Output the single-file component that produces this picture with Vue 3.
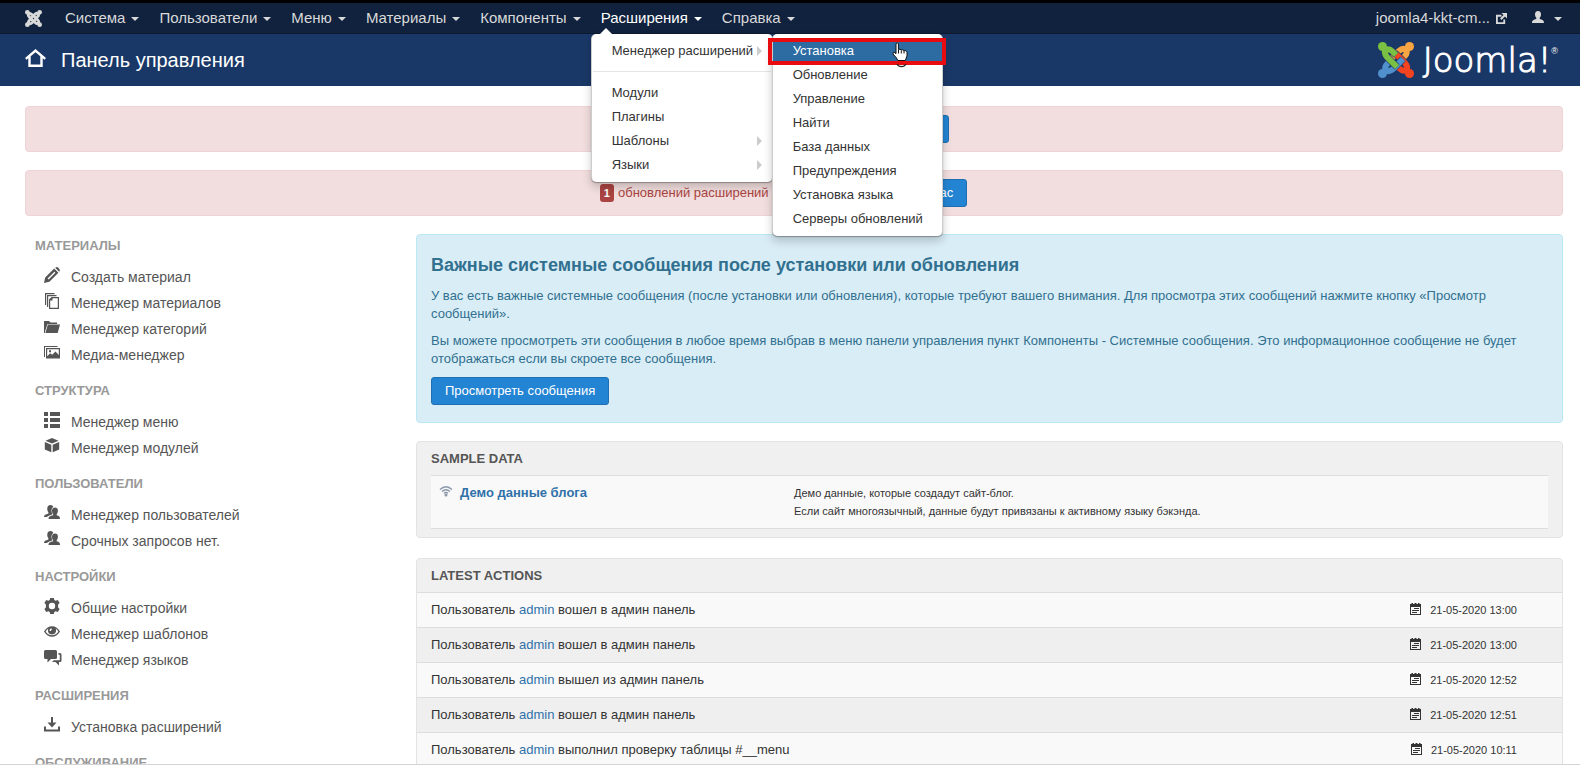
<script setup>
const menus = [
  { title: 'Система' },
  { title: 'Пользователи' },
  { title: 'Меню' },
  { title: 'Материалы' },
  { title: 'Компоненты' },
  { title: 'Расширения', open: true },
  { title: 'Справка' },
]

const extensionLinks = [
  { title: 'Модули' },
  { title: 'Плагины' },
  { title: 'Шаблоны', sub: true },
  { title: 'Языки', sub: true },
]

const managerLinks = [
  'Установка',
  'Обновление',
  'Управление',
  'Найти',
  'База данных',
  'Предупреждения',
  'Установка языка',
  'Серверы обновлений',
]

const icons = {
  pencil: 'M0 16l1.200-5.500L10.200 1.600l4.200 4.200L5.400 14.800zM11.200.8l.5-.4q1.200-.7 2.400.2l1.300 1.300q.9 1.200.2 2.400l-.4.5zM3.600 11.500l1 1 6.800-6.800-1-1z',
  copy: 'M1 0h9.500v1.200H2.200V12H1zM3 2h9.500v1.200H4.200V14H3zM7.500 4H15v12H5V6.500zM8.500 5.200V7.500H6.200V14.800H13.800V5.200z',
  folder: 'M0 2h5l1.500 1.500H13V5H3.500L1 12.500V14H0zM3.900 5.500H16l-2.300 8.500H1.400z',
  picture: 'M0 1h13.500v1H1v10H0zM2 3h14v10.500H2zM3.200 4.200v7l3-3 2 1.500L11.500 6.500l3.300 3.500V4.200zM5 5.300h2v2H5z',
  list: 'M0 0h4v4H0zM6 0h10v4H6zM0 6h4v4H0zM6 6h10v4H6zM0 12h4v4H0zM6 12h10v4H6z',
  cube: 'M8 0l6.500 2.700L8 5.500 1.500 2.700zM.8 3.900l6.500 2.900V14.200L.8 11.500zM15.200 3.900L8.700 6.800v7.400l6.500-2.700z',
  users: 'M6.500 0C8 0 9 .9 9.300 2 7.600 3 7.200 5 7.700 7.200c.2 1 .6 1.500.9 2L5.300 10.500C4 11 3.300 11.500 3 12H0c0-2 1.500-2.600 4.400-3.500V7.300C3.300 6.200 3.200 4.500 3.300 3 3.500 1 4.800 0 6.500 0zM11 2.500c1.900 0 2.900 1.200 2.900 3 0 1.700-.4 2.700-1.200 3.600v1.200c2.500.8 3.300 1.500 3.300 3.700H4.500c0-2.200 1.300-2.900 4.600-3.700V9.100C8.200 8 8 7 8 5.500c0-1.800 1.200-3 3-3z',
  gear: 'M6.200 0h3.600l.5 2 1.300.7 2.200-.7 1.800 3-1.500 1.600v2.800L15.600 11l-1.800 3-2.200-.7-1.300.7-.5 2H6.200l-.5-2-1.300-.7-2.200.7-1.800-3 1.500-1.600V6.600L.4 5l1.800-3 2.200.7L5.700 2zM8 4.800a3.200 3.200 0 100 6.400 3.200 3.200 0 000-6.400z',
  eye: 'M0 7.500C2 4 5 2.300 8 2.300s6 1.700 8 5.200c-2 3.500-5 5.200-8 5.200S2 11 0 7.500zM1.700 7.500C3 10 5.300 11.300 8 11.300S13 10 14.300 7.500C13.600 6.200 12.700 5.300 11.700 4.600 13 8 11 10.500 8 10.500S3 8 4.300 4.600C3.300 5.300 2.400 6.200 1.700 7.500zM7 4.200q-1.700.7-1.400 2.700l1.400.2q0-1.500 1.300-1.800z',
  comments: 'M1.500 0h10Q13 0 13 1.500v6Q13 9 11.500 9H7l-3.500 3.500V9h-2Q0 9 0 7.500v-6Q0 0 1.500 0zM14.500 3h1.300Q17.500 3 17.500 4.500v6Q17.500 12 16 12h-1v3.500L11.500 12H8l1.800-1.700h6V4.800h-1.300z',
  download: 'M7 0h2v5.500h3.500L8 10.500 3.500 5.500H7zM0 9.500h2V12.500h12V9.500h2V14.500H0z',
  home: 'M10.500 0L21 9l-1.500 1.800-1.800-1.500V18H3.300V9.300L1.500 10.800 0 9zM10.500 3.200L5.700 7.300V15.600H15.300V7.300z',
  external: 'M0 2h6v2H2v6h6V7h2v5H0zM6 0h6v6L9.800 3.800 6 7.600 4.400 6 8.200 2.200z',
  user: 'M6 0c2 0 3 1.300 3 3.200C9 5 8.300 6 7.700 6.700V8c2.700.8 4.300 1.200 4.300 4H0c0-2.800 1.600-3.200 4.300-4V6.700C3.700 6 3 5 3 3.200 3 1.300 4 0 6 0z',
  calendar: 'M0 1h1.500V0h1.500v1h1.500V0h2v1H8V0h1.500v1H11v11H0zM1 4v7h9V4zM4 5h5v1H4zM2 7h7v1H2zM2 9h5v1H2z',
}

const groups = [
  {
    title: 'Материалы',
    items: [
      { icon: 'pencil', title: 'Создать материал' },
      { icon: 'copy', title: 'Менеджер материалов' },
      { icon: 'folder', title: 'Менеджер категорий' },
      { icon: 'picture', title: 'Медиа-менеджер' },
    ],
  },
  {
    title: 'Структура',
    items: [
      { icon: 'list', title: 'Менеджер меню' },
      { icon: 'cube', title: 'Менеджер модулей' },
    ],
  },
  {
    title: 'Пользователи',
    items: [
      { icon: 'users', title: 'Менеджер пользователей' },
      { icon: 'users', title: 'Срочных запросов нет.' },
    ],
  },
  {
    title: 'Настройки',
    items: [
      { icon: 'gear', title: 'Общие настройки' },
      { icon: 'eye', title: 'Менеджер шаблонов' },
      { icon: 'comments', title: 'Менеджер языков' },
    ],
  },
  {
    title: 'Расширения',
    items: [{ icon: 'download', title: 'Установка расширений' }],
  },
  { title: 'Обслуживание', items: [] },
]

const actions = [
  { text: 'вошел в админ панель', date: '21-05-2020 13:00' },
  { text: 'вошел в админ панель', date: '21-05-2020 13:00' },
  { text: 'вышел из админ панель', date: '21-05-2020 12:52' },
  { text: 'вошел в админ панель', date: '21-05-2020 12:51' },
  { text: 'выполнил проверку таблицы #__menu', date: '21-05-2020 10:11' },
]

const armPath = 'M18 13L14.500 9.500Q11 6 8 8Q5.500 11 9 15L19 25'
const arms = [
  { color: '#f9a541', angle: 90 },
  { color: '#f44321', angle: 180 },
  { color: '#5091cd', angle: 270 },
  { color: '#7ac143', angle: 0 },
]
</script>

<template>
  <div class="page">
    <nav class="navbar" aria-label="Главное меню">
      <a class="brand" href="#" aria-label="Joomla">
        <svg class="brand-icon" viewBox="0 0 36 36">
          <g v-for="arm in arms" :key="arm.angle" :transform="`rotate(${arm.angle} 18 18)`">
            <circle cx="5" cy="5" r="5" fill="#d9d9d9" />
            <path :d="armPath" fill="none" stroke="#d9d9d9" stroke-width="6" />
          </g>
        </svg>
      </a>
      <ul class="menu">
        <li v-for="menu in menus" :key="menu.title" class="menu-item">
          <a class="menu-link" :class="{ active: menu.open }" href="#">{{ menu.title }}<span class="caret"></span></a>
          <div v-if="menu.open" class="dropdown">
            <a class="drop-link" href="#">Менеджер расширений<span class="sub-arrow"></span></a>
            <hr class="divider" />
            <a v-for="link in extensionLinks" :key="link.title" class="drop-link" href="#">
              {{ link.title }}<span v-if="link.sub" class="sub-arrow"></span>
            </a>
            <div class="submenu">
              <a
                v-for="(link, index) in managerLinks"
                :key="link"
                class="drop-link"
                :class="{ selected: index === 0 }"
                href="#"
              >{{ link }}</a>
              <span class="marker"></span>
              <svg class="pointer" viewBox="0 0 16 23">
                <path d="M5 22a5 4.500 0 009 0" fill="none" stroke="#222" stroke-width="1.200" />
                <path
                  d="M4 1.500Q5.200.3 6.400 1.500V7.500L8 7.200 9.200 8 10.800 7.800 12 8.700 13.500 8.700Q15 9.200 15 10.500V14L13.300 18.500H5.800L4.500 16 1 12Q.6 10.300 2.200 10.300L4 11.700z"
                  fill="#fff"
                  stroke="#111"
                />
                <path d="M6.500 8v3.500M9.300 8.500v3M12 9v2.500" fill="none" stroke="#111" />
              </svg>
            </div>
          </div>
        </li>
      </ul>
      <a class="site-link" href="#">joomla4-kkt-cm...
        <svg class="external-icon" viewBox="0 0 12 12"><path :d="icons.external" /></svg>
      </a>
      <button class="user-menu" type="button" aria-label="Меню пользователя">
        <svg class="user-icon" viewBox="0 0 12 12"><path :d="icons.user" /></svg>
        <span class="caret"></span>
      </button>
    </nav>

    <header class="header">
      <svg class="home-icon" viewBox="0 0 21 18"><path :d="icons.home" fill-rule="evenodd" /></svg>
      <h1 class="title">Панель управления</h1>
      <a class="logo" href="#">
        <svg class="logo-icon" viewBox="0 0 36 36">
          <g v-for="arm in arms" :key="arm.angle" :transform="`rotate(${arm.angle} 18 18)`">
            <path :d="armPath" fill="none" stroke="#1a3867" stroke-width="7" />
            <circle cx="4.500" cy="4.500" r="4.500" :fill="arm.color" />
            <path :d="armPath" fill="none" :stroke="arm.color" stroke-width="6" />
          </g>
        </svg>
        <span class="wordmark">Joomla!</span><span class="registered">®</span>
      </a>
    </header>

    <main class="content">
      <div class="alert">
        <span>Доступна Joomla! версии 3.9.18:</span>
        <button class="btn" type="button">Обновить сейчас</button>
      </div>
      <div class="alert">
        <span class="badge">1</span>
        <span>обновлений расширений доступно:</span>
        <button class="btn" type="button">Обновить сейчас</button>
      </div>

      <div class="columns">
        <aside class="sidebar">
          <section v-for="group in groups" :key="group.title" class="group">
            <h2 class="group-title">{{ group.title }}</h2>
            <a v-for="item in group.items" :key="item.title" class="side-link" href="#">
              <svg class="side-icon" viewBox="0 0 16 16"><path :d="icons[item.icon]" fill-rule="evenodd" /></svg>
              {{ item.title }}
            </a>
          </section>
        </aside>

        <div class="main-column">
          <section class="notice">
            <h2 class="notice-title">Важные системные сообщения после установки или обновления</h2>
            <p>У вас есть важные системные сообщения (после установки или обновления), которые требуют вашего внимания. Для просмотра этих сообщений нажмите кнопку «Просмотр сообщений».</p>
            <p>Вы можете просмотреть эти сообщения в любое время выбрав в меню панели управления пункт Компоненты - Системные сообщения. Это информационное сообщение не будет отображаться если вы скроете все сообщения.</p>
            <button class="btn" type="button">Просмотреть сообщения</button>
          </section>

          <section class="panel sample">
            <h2 class="panel-title">Sample Data</h2>
            <div class="sample-row">
              <a class="sample-name" href="#">
                <svg class="wifi-icon" viewBox="0 0 14 12">
                  <path d="M1 4.500Q7-1 13 4.500M3 6.500Q7 2.800 11 6.500M5 8.300Q7 6.500 9 8.300" fill="none" stroke="#8b98aa" stroke-width="1.400" />
                  <circle cx="7" cy="10" r="1.500" fill="#8b98aa" />
                </svg>
                Демо данные блога
              </a>
              <div class="sample-text">Демо данные, которые создадут сайт-блог.<br />Если сайт многоязычный, данные будут привязаны к активному языку бэкэнда.</div>
            </div>
          </section>

          <section class="panel">
            <h2 class="panel-title latest-title">Latest Actions</h2>
            <table class="actions" aria-label="Latest Actions">
              <tbody>
                <tr v-for="(action, index) in actions" :key="index">
                  <td>Пользователь <a href="#">admin</a> {{ action.text }}</td>
                  <td class="date">
                    <svg class="calendar-icon" viewBox="0 0 11 12"><path :d="icons.calendar" fill-rule="evenodd" /></svg>{{ action.date }}
                  </td>
                </tr>
              </tbody>
            </table>
          </section>
        </div>
      </div>
    </main>
  </div>
</template>

<style>
body {
  margin: 0;
  background: #fff;
}
</style>

<style scoped>
* {
  box-sizing: border-box;
}

.page {
  display: flex;
  flex-direction: column;
  height: 100vh;
  overflow: hidden;
  border-top: 3px solid #000;
  border-bottom: 1px solid #d4d4d4;
  font: 13px/18px "Liberation Sans", Arial, sans-serif;
  color: #333;
}

a {
  color: #3071a9;
  text-decoration: none;
}

h1,
h2,
p,
ul {
  margin: 0;
  padding: 0;
}

svg {
  flex: none;
  display: block;
  fill: currentColor;
  overflow: visible;
}

/* Navigation bar */
.navbar {
  flex: none;
  display: flex;
  align-items: center;
  height: 31px;
  padding: 0 18px 0 25px;
  background: #10223e;
  border-bottom: 1px solid #0c192e;
}

.brand-icon {
  width: 17px;
  height: 17px;
}

.menu {
  display: flex;
  margin-left: 13px;
  margin-right: auto;
  list-style: none;
}

.menu-item {
  position: relative;
}

.menu-link,
.site-link,
.user-menu {
  display: flex;
  align-items: center;
  height: 30px;
  font-size: 15px;
  color: #d9d9d9;
}

.menu-link {
  gap: 6px;
  padding: 0 10px;
}

.menu-link.active {
  color: #fff;
}

.caret {
  margin-top: 2px;
  border: 4px solid transparent;
  border-top-color: currentColor;
  border-bottom: 0;
}

.site-link {
  gap: 6px;
}

.external-icon {
  width: 11px;
  height: 11px;
}

.user-icon {
  width: 12px;
  height: 12px;
  margin-bottom: 3px;
}

.user-menu {
  gap: 10px;
  margin-left: 25px;
  padding: 0;
  border: 0;
  background: none;
}

/* Dropdown menus */
.dropdown,
.submenu {
  position: absolute;
  z-index: 10;
  padding: 5px 0;
  background: #fff;
  border: solid rgba(0, 0, 0, 0.2);
  border-width: 0 1px;
  border-radius: 5px;
  box-shadow: 0 5px 10px rgba(0, 0, 0, 0.2), 0 1px 1px rgba(0, 0, 0, 0.3);
}

.dropdown {
  top: 31px;
  left: 0;
  width: 182px;
}

.dropdown::before {
  content: "";
  position: absolute;
  top: -6px;
  left: 8px;
  border: 6px solid transparent;
  border-top: 0;
  border-bottom-color: #fff;
}

.submenu {
  top: 0;
  left: 100%;
  width: 171px;
}

.drop-link {
  display: flex;
  align-items: center;
  justify-content: space-between;
  height: 24px;
  padding: 0 10px 0 20px;
  color: #333;
  white-space: nowrap;
}

.drop-link.selected {
  background: #2d6ca2;
  color: #fff;
}

.sub-arrow {
  border: 5px solid transparent;
  border-left-color: #ccc;
  border-right: 0;
}

.divider {
  height: 1px;
  margin: 8px 1px 9px;
  border: 0;
  background: #e5e5e5;
}

.marker {
  position: absolute;
  top: 4px;
  left: -5px;
  right: -4px;
  height: 27px;
  border: 4px solid #e80c10;
}

.pointer {
  position: absolute;
  top: 8px;
  left: 119px;
  width: 16px;
  height: 23px;
}

/* Header */
.header {
  flex: none;
  display: flex;
  align-items: center;
  height: 52px;
  padding: 0 22px 0 25px;
  background: #1a3867;
  color: #fff;
}

.home-icon {
  width: 21px;
  height: 18px;
  margin-bottom: 4px;
}

.title {
  margin-left: 15px;
  margin-right: auto;
  font-size: 20px;
  font-weight: 400;
  line-height: 24px;
}

.logo {
  display: flex;
  align-items: center;
  color: #fff;
}

.logo-icon {
  width: 36px;
  height: 36px;
}

.wordmark {
  margin-left: 9px;
  font: 200 34px/36px "DejaVu Sans Light", "DejaVu Sans", sans-serif;
  -webkit-text-stroke: 1px #fff;
}

.registered {
  align-self: flex-start;
  font-size: 9px;
  line-height: 18px;
}

/* Content */
.content {
  display: flex;
  flex-direction: column;
  gap: 18px;
  padding: 20px 17px 0 25px;
}

.alert {
  display: flex;
  align-items: center;
  justify-content: center;
  gap: 4px;
  height: 46px;
  padding: 0 35px 0 14px;
  background: #f2dede;
  border: 1px solid #eed3d7;
  border-radius: 4px;
  color: #a94442;
}

.badge {
  padding: 0 4px;
  border-radius: 3px;
  background: #a94442;
  color: #fff;
  font-size: 11px;
  font-weight: 700;
}

.btn {
  height: 28px;
  padding: 0 13px;
  border: 1px solid #1f6fb2;
  border-radius: 3px;
  background: #2384d3;
  color: #fff;
  font: inherit;
}

.columns {
  display: grid;
  grid-template-columns: 359fr 1147fr;
  gap: 32px;
}

/* Sidebar */
.sidebar {
  display: flex;
  flex-direction: column;
  gap: 14px;
  padding: 3px 0 0 10px;
}

.group-title {
  margin-bottom: 9px;
  font-size: 13px;
  line-height: 18px;
  color: #999;
  text-transform: uppercase;
}

.side-link {
  display: flex;
  align-items: center;
  gap: 11px;
  height: 26px;
  padding-left: 9px;
  font-size: 14px;
  color: #555;
}

.side-icon {
  width: 16px;
  height: 16px;
  margin-bottom: 4px;
}

/* Right column */
.main-column {
  display: flex;
  flex-direction: column;
}

.notice {
  margin-bottom: 18px;
  padding: 17px 14px;
  background: #d9edf7;
  border: 1px solid #bce8f1;
  border-radius: 4px;
  color: #31708f;
}

.notice-title {
  margin-bottom: 8px;
  font-size: 18px;
  line-height: 27px;
}

.notice p {
  margin-bottom: 9px;
}

.notice .btn {
  display: block;
}

.panel {
  margin-bottom: 20px;
  background: #f0f0f0;
  border: 1px solid #e3e3e3;
  border-radius: 4px;
}

.panel-title {
  font-size: 13px;
  line-height: 18px;
  color: #555;
  text-transform: uppercase;
}

.sample {
  padding: 8px 14px;
}

.sample .panel-title {
  margin-bottom: 7px;
}

.sample-row {
  display: grid;
  grid-template-columns: 13fr 27fr;
  padding: 8px 0;
  background: #f9f9f9;
  border: solid #ddd;
  border-width: 1px 0;
}

.sample-name {
  display: flex;
  align-items: center;
  align-self: start;
  gap: 7px;
  padding-left: 8px;
  font-weight: 700;
}

.wifi-icon {
  width: 14px;
  height: 12px;
  margin-bottom: 4px;
}

.sample-text {
  font-size: 11px;
}

.latest-title {
  padding: 8px 14px 7px;
}

.actions {
  width: 100%;
  border-collapse: collapse;
}

.actions tr {
  background: #f9f9f9;
}

.actions tr:nth-child(even) {
  background: #efefef;
}

.actions td {
  height: 35px;
  padding: 0 14px;
  border-top: 1px solid #ddd;
}

.actions .date {
  padding-right: 45px;
  font-size: 11px;
  text-align: right;
  white-space: nowrap;
}

.calendar-icon {
  display: inline-block;
  width: 11px;
  height: 12px;
  margin-right: 9px;
  vertical-align: -1px;
}
</style>
